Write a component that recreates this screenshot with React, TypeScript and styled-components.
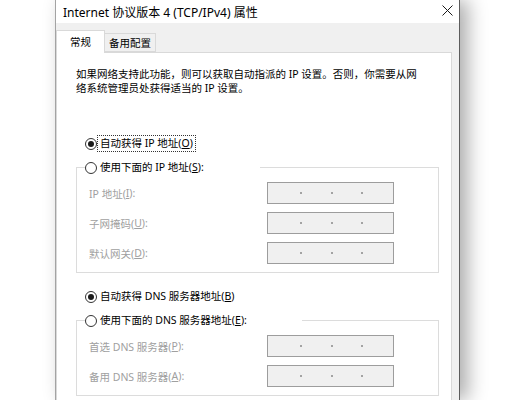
import styled, { createGlobalStyle } from 'styled-components';

const GlobalStyle = createGlobalStyle`
  html, body {
    margin: 0;
    background: #ffffff;
  }
  body {
    font-family: "Noto Sans", "Noto Sans CJK SC", sans-serif;
    color: #000000;
  }
`;

const Stage = styled.div`
  display: flex;
  width: 524px;
  height: 400px;
  padding-left: 55px;
  box-sizing: border-box;
  overflow: hidden;
  background: #ffffff;
`;

const Window = styled.div`
  display: flex;
  flex-direction: column;
  flex: none;
  width: 405px;
  box-sizing: border-box;
  border-left: 1px solid #a3a3a3;
  border-right: 1px solid #5c5c5c;
  background: #f0f0f0;
  box-shadow: 8px 0 18px rgba(0, 0, 0, 0.32);
`;

const TitleBar = styled.div`
  display: flex;
  align-items: center;
  justify-content: space-between;
  height: 23px;
  padding: 0 6px 0 7px;
  background: #ffffff;
  font-size: 12px;
`;

const Title = styled.span`
  white-space: nowrap;
`;

const CloseButton = styled.span`
  display: inline-flex;
  margin-top: -3px;
`;

const Body = styled.div`
  display: flex;
  flex-direction: column;
  flex: 1;
  padding: 7px 7px 0 0;
`;

const TabStrip = styled.div`
  display: flex;
  align-items: flex-end;
  height: 22px;
`;

const Tab = styled.div<{ $active?: boolean }>`
  position: relative;
  z-index: 1;
  display: flex;
  align-items: center;
  justify-content: center;
  box-sizing: border-box;
  width: ${(p) => (p.$active ? '49px' : '51px')};
  height: ${(p) => (p.$active ? '23px' : '19px')};
  margin-bottom: ${(p) => (p.$active ? '-1px' : '0')};
  padding-bottom: ${(p) => (p.$active ? '1px' : '0')};
  border: 1px solid #d9d9d9;
  border-bottom: ${(p) => (p.$active ? 'none' : '1px solid #d9d9d9')};
  border-left: ${(p) => (p.$active ? '1px solid #d9d9d9' : 'none')};
  background: ${(p) => (p.$active ? '#ffffff' : '#f0f0f0')};
  font-size: 10.5px;
  white-space: nowrap;
`;

const Panel = styled.div`
  flex: 1;
  padding: 15px 12px 0 19px;
  border: 1px solid #d9d9d9;
  border-bottom: none;
  background: #ffffff;
`;

const Intro = styled.p`
  margin: 0;
  font-size: 10.5px;
  line-height: 13.5px;
  white-space: nowrap;
`;

const RadioRow = styled.div<{ $gap?: number; $indent?: number }>`
  display: flex;
  align-items: center;
  height: 17px;
  margin-top: ${(p) => p.$gap ?? 0}px;
  padding-left: ${(p) => p.$indent ?? 9}px;
  font-size: 10.5px;
  white-space: nowrap;
`;

const RadioCircle = styled.span<{ $checked?: boolean }>`
  display: inline-flex;
  align-items: center;
  justify-content: center;
  flex: none;
  width: 12px;
  height: 12px;
  box-sizing: border-box;
  border: 1px solid #333333;
  border-radius: 50%;
  background: #ffffff;

  &::after {
    content: '';
    display: ${(p) => (p.$checked ? 'block' : 'none')};
    width: 6px;
    height: 6px;
    border-radius: 50%;
    background: #1a1a1a;
  }
`;

const RadioLabel = styled.span<{ $focused?: boolean }>`
  margin-left: 1px;
  padding: 0 2px;
  line-height: 15px;
  outline: ${(p) => (p.$focused ? '1px dotted #333333' : 'none')};

  u {
    text-underline-offset: 1px;
  }
`;

const Group = styled.fieldset<{ $gap: number }>`
  margin: ${(p) => p.$gap}px 0 0;
  padding: 0 0 8px 0;
  min-width: 0;
  border: 1px solid #dcdcdc;
`;

const Legend = styled.legend<{ $width: number }>`
  width: ${(p) => p.$width}px;
  margin-left: 8px;
  padding: 0;
`;

const FieldGrid = styled.div`
  display: grid;
  grid-template-columns: 178px 127px;
  row-gap: 8px;
  padding: 6px 0 0 12px;
`;

const FieldLabel = styled.span`
  display: flex;
  align-items: center;
  height: 22px;
  font-size: 10.5px;
  color: #a0a0a0;
  white-space: nowrap;

  u {
    text-underline-offset: 1px;
  }
`;

const AddressBox = styled.div`
  display: flex;
  align-items: center;
  gap: 28.5px;
  box-sizing: border-box;
  height: 22px;
  padding-left: 32px;
  border: 1px solid #9d9d9d;
  background: #f0f0f0;
`;

const Dot = styled.span`
  width: 2px;
  height: 2px;
  border-radius: 50%;
  background: #8a8a8a;
`;

function CloseIcon() {
  return (
    <svg width="11" height="11" viewBox="0 0 11 11">
      <path d="M0.5 0.5 L10.5 10.5 M10.5 0.5 L0.5 10.5" stroke="#1a1a1a" strokeWidth="1" fill="none" />
    </svg>
  );
}

function Radio({
  checked,
  focused,
  children,
}: {
  checked?: boolean;
  focused?: boolean;
  children: React.ReactNode;
}) {
  return (
    <>
      <RadioCircle $checked={checked} />
      <RadioLabel $focused={focused}>{children}</RadioLabel>
    </>
  );
}

function AddressField({ label }: { label: React.ReactNode }) {
  return (
    <>
      <FieldLabel>{label}</FieldLabel>
      <AddressBox>
        <Dot />
        <Dot />
        <Dot />
      </AddressBox>
    </>
  );
}

export default function App() {
  return (
    <>
      <GlobalStyle />
      <Stage>
        <Window>
          <TitleBar>
            <Title>Internet 协议版本 4 (TCP/IPv4) 属性</Title>
            <CloseButton>
              <CloseIcon />
            </CloseButton>
          </TitleBar>
          <Body>
            <TabStrip>
              <Tab $active>常规</Tab>
              <Tab>备用配置</Tab>
            </TabStrip>
            <Panel>
              <Intro>
                如果网络支持此功能，则可以获取自动指派的 IP 设置。否则，你需要从网
                <br />
                络系统管理员处获得适当的 IP 设置。
              </Intro>

              <RadioRow $gap={40}>
                <Radio checked focused>
                  自动获得 IP 地址(<u>O</u>)
                </Radio>
              </RadioRow>
              <Group $gap={7}>
                <Legend $width={175}>
                  <RadioRow $indent={0}>
                    <Radio>
                      使用下面的 IP 地址(<u>S</u>):
                    </Radio>
                  </RadioRow>
                </Legend>
                <FieldGrid>
                  <AddressField label={<>IP 地址(<u>I</u>):</>} />
                  <AddressField label={<>子网掩码(<u>U</u>):</>} />
                  <AddressField label={<>默认网关(<u>D</u>):</>} />
                </FieldGrid>
              </Group>

              <RadioRow $gap={15}>
                <Radio checked>
                  自动获得 DNS 服务器地址(<u>B</u>)
                </Radio>
              </RadioRow>
              <Group $gap={7}>
                <Legend $width={217}>
                  <RadioRow $indent={0}>
                    <Radio>
                      使用下面的 DNS 服务器地址(<u>E</u>):
                    </Radio>
                  </RadioRow>
                </Legend>
                <FieldGrid>
                  <AddressField label={<>首选 DNS 服务器(<u>P</u>):</>} />
                  <AddressField label={<>备用 DNS 服务器(<u>A</u>):</>} />
                </FieldGrid>
              </Group>
            </Panel>
          </Body>
        </Window>
      </Stage>
    </>
  );
}
